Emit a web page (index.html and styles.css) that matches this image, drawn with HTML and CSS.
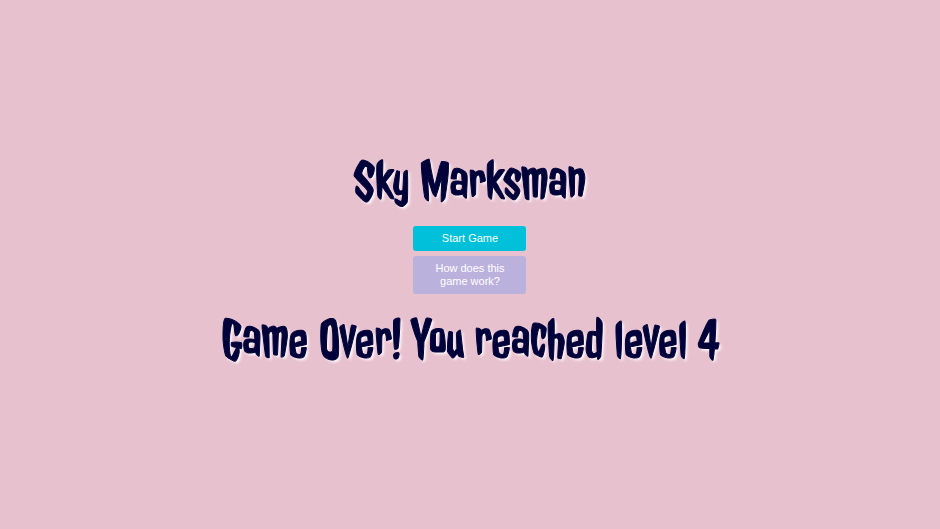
FILE: index.html
```html
<!DOCTYPE html>
<html lang="en">
<head>
    <meta charset="UTF-8">
    <meta name="viewport" content="width=device-width, initial-scale=1.0">
    <title>Sky Marksman</title>
    <link rel="stylesheet" href="styles.css">
</head>
<body>
    <main class="menu">
        <h1 class="title">Sky Marksman</h1>
        <div class="buttons">
            <button type="button" class="btn btn-start">Start Game</button>
            <button type="button" class="btn btn-help">How does this game work?</button>
        </div>
        <h2 class="title">Game Over! You reached level 4</h2>
    </main>
</body>
</html>
```

FILE: styles.css
```css
* {
    box-sizing: border-box;
}
body {
    margin: 0;
    min-height: 100vh;
    display: flex;
    justify-content: center;
    align-items: center;
    background-color: #e8c1cf;
    font-family: "Liberation Sans", Arial, sans-serif;
}
.menu {
    display: flex;
    flex-direction: column;
    align-items: center;
    gap: 20px;
    padding-bottom: 10px;
}
.title {
    margin: 0;
    color: #02023a;
    font-family: "Jolly Lodger", "Open Sans", sans-serif;
    font-size: 56px;
    font-weight: normal;
    line-height: 50px;
    text-align: center;
    text-shadow: 2px 2px 3px white;
    -webkit-text-stroke: 1px #02023a;
}
.buttons {
    display: flex;
    flex-direction: column;
    gap: 5px;
    width: 113px;
}
.btn {
    padding: 6px 20px;
    border: none;
    border-radius: 3px;
    color: white;
    font-family: inherit;
    font-size: 11px;
    line-height: 13px;
    cursor: pointer;
}
.btn-start {
    background-color: #00c1d9;
}
.btn-help {
    background-color: #bbb1dd;
}
```
